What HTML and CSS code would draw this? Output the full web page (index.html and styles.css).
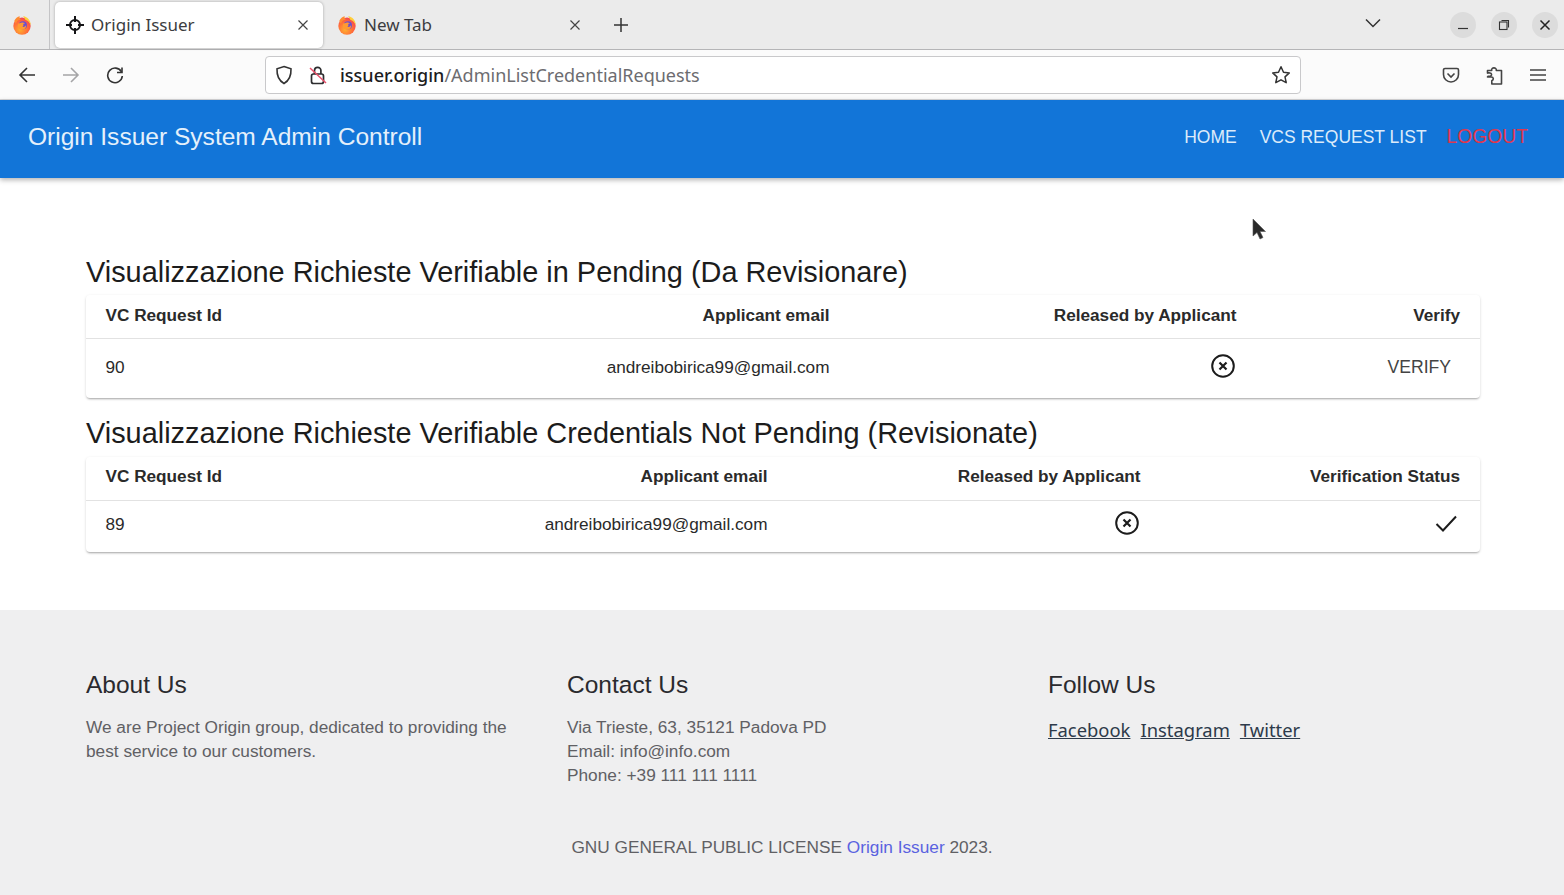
FILE: index.html
```html
<!DOCTYPE html>
<html lang="en">
<head>
<meta charset="UTF-8">
<title>Origin Issuer</title>
<link rel="stylesheet" href="styles.css">
</head>
<body>
<svg class="icon-defs" width="0" height="0">
    <defs>
        <radialGradient id="fx-body" cx="0.4" cy="0.7" r="0.8">
            <stop offset="0" stop-color="#ffb02e"/>
            <stop offset="0.55" stop-color="#ff6a3a"/>
            <stop offset="1" stop-color="#f0385c"/>
        </radialGradient>
        <symbol id="fx-logo" viewBox="0 0 18 18">
            <circle cx="9" cy="10" r="7.800" fill="url(#fx-body)"/>
            <path d="M2 5.500C3 3 5 1.500 7 1.200 6.500 2.500 7 3.500 8 4c-2.500.5-4 2-4.500 4z" fill="#ff8a30"/>
            <path d="M10 1c4 .8 7 4.200 6.800 8.500-.6-2.500-2.200-4.500-4.800-5.300z" fill="#ffcf3a"/>
            <circle cx="9.800" cy="9.300" r="3.700" fill="#6a4fd0"/>
            <path d="M7 7.500c1.500-1.300 4-1 5 .8-.8-.5-1.500-.4-2-.1.600.8.300 2-.6 2.500 1.600.3 2.800-.5 3.300-1.700.3 2.500-1.500 4.300-3.700 4.300-2.300 0-3.800-1.800-3.800-3.700 0-.8.300-1.500.8-2.100z" fill="#ff9a30"/>
        </symbol>
        <symbol id="cancel" viewBox="0 0 24 24">
            <circle cx="12" cy="12" r="10.800" fill="none" stroke="#1c1c1c" stroke-width="2"/>
            <path d="M8.500 8.500l7 7M15.500 8.500l-7 7" fill="none" stroke="#1c1c1c" stroke-width="2.200"/>
        </symbol>
    </defs>
</svg>

<div class="tab-strip">
    <div class="tab-home">
        <svg width="20" height="20"><use href="#fx-logo"/></svg>
    </div>
    <div class="tab tab-active">
        <svg width="18" height="18" viewBox="0 0 18 18" fill="none" stroke="#141416" stroke-width="2"><circle cx="9" cy="9" r="5"/><path d="M9 0v6M9 12v6M0 9h6M12 9h6"/></svg>
        <span class="tab-label">Origin Issuer</span>
        <svg class="tab-close" width="12" height="12" viewBox="0 0 12 12" stroke="#444" stroke-width="1.200"><path d="M1.500 1.500l9 9M10.500 1.500l-9 9"/></svg>
    </div>
    <div class="tab">
        <svg width="20" height="20"><use href="#fx-logo"/></svg>
        <span class="tab-label">New Tab</span>
        <svg class="tab-close" width="12" height="12" viewBox="0 0 12 12" stroke="#444" stroke-width="1.200"><path d="M1.500 1.500l9 9M10.500 1.500l-9 9"/></svg>
    </div>
    <svg class="new-tab" width="16" height="16" viewBox="0 0 16 16" stroke="#333" stroke-width="1.500"><path d="M8 1v14M1 8h14"/></svg>
    <svg class="tab-list" width="16" height="10" viewBox="0 0 16 10" fill="none" stroke="#333" stroke-width="1.500"><path d="M1 1.500l7 7 7-7"/></svg>
    <div class="win-buttons">
        <span class="win-btn"><svg width="12" height="12" viewBox="0 0 12 12" stroke="#333" stroke-width="1.200"><path d="M1 9.500h10"/></svg></span>
        <span class="win-btn"><svg width="12" height="12" viewBox="0 0 12 12" fill="none" stroke="#333" stroke-width="1.100"><rect x="1.500" y="3" width="7.500" height="7.500"/><path d="M3.500 1.500h7v7"/></svg></span>
        <span class="win-btn"><svg width="12" height="12" viewBox="0 0 12 12" stroke="#222" stroke-width="1.500"><path d="M1.500 1.500l9 9M10.500 1.500l-9 9"/></svg></span>
    </div>
</div>

<div class="toolbar">
    <div class="nav-icons">
        <svg width="18" height="18" viewBox="0 0 18 18" fill="none" stroke="#333" stroke-width="1.600"><path d="M17 9H2M9 2L2 9l7 7"/></svg>
        <svg width="18" height="18" viewBox="0 0 18 18" fill="none" stroke="#a5a5a7" stroke-width="1.600"><path d="M1 9h15M9 2l7 7-7 7"/></svg>
        <svg width="18" height="18" viewBox="0 0 18 18" fill="none" stroke="#333" stroke-width="1.600"><path d="M15.500 6A7.300 7.300 0 1 0 16.300 10"/><path d="M16 1.500V6.500H11"/></svg>
    </div>
    <div class="url-bar">
        <svg width="18" height="20" viewBox="0 0 18 20" fill="none" stroke="#333" stroke-width="1.600"><path d="M9 1.500l7 2.300c.3 6.500-1.500 11.700-7 14.700-5.500-3-7.300-8.200-7-14.700z"/></svg>
        <svg class="lock" width="18" height="20" viewBox="0 0 18 20" fill="none" stroke="#2c2c2e" stroke-width="1.700"><rect x="2.500" y="9" width="12" height="9.500" rx="2"/><path d="M5.500 9V5.500a3.200 3.200 0 0 1 6.400 0V9"/><path d="M1 3l16 15" stroke="#e8506a" stroke-width="1.500"/></svg>
        <span class="url-text"><b>issuer.origin</b>/AdminListCredentialRequests</span>
        <svg class="star" width="20" height="20" viewBox="0 0 20 20" fill="none" stroke="#333" stroke-width="1.500" stroke-linejoin="round"><path d="M10 1.800l2.500 5.400 5.800.7-4.300 4 1.200 5.800L10 14.800l-5.200 2.900L6 11.900l-4.300-4 5.800-.7z"/></svg>
    </div>
    <div class="tool-icons">
        <svg width="18" height="18" viewBox="0 0 18 18" fill="none" stroke="#444" stroke-width="1.600"><path d="M3 2.500h12a1.500 1.500 0 0 1 1.500 1.500v4.500a7.500 7.500 0 0 1-15 0V4A1.500 1.500 0 0 1 3 2.500z"/><path d="M5.500 7.500L9 11l3.500-3.500"/></svg>
        <svg width="18" height="20" viewBox="0 0 18 20" fill="none" stroke="#444" stroke-width="1.600" stroke-linejoin="round"><path d="M1.500 5.500h4.200c-.8-3.500 5.200-3.500 4.600 0h5.200v13.500H5.800v-3.200c2.200-1 2-3.800-.6-3.800H1.500l.6-.8c2.600.6 3.800-.9 3.400-2.200-.3-1.200-2.400-1.400-4-.9z"/></svg>
        <svg width="16" height="14" viewBox="0 0 16 14" stroke="#444" stroke-width="1.500"><path d="M0 2h16M0 7h16M0 12h16"/></svg>
    </div>
</div>

<header class="appbar">
    <h1 class="app-title">Origin Issuer System Admin Controll</h1>
    <nav class="app-nav">
        <a>HOME</a>
        <a>VCS REQUEST LIST</a>
        <a class="logout">LOGOUT</a>
    </nav>
</header>

<main class="content">
    <h2 class="section-title">Visualizzazione Richieste Verifiable in Pending (Da Revisionare)</h2>
    <div class="card">
        <table class="pending-table">
            <thead>
                <tr><th class="left">VC Request Id</th><th>Applicant email</th><th>Released by Applicant</th><th>Verify</th></tr>
            </thead>
            <tbody>
                <tr>
                    <td class="left">90</td>
                    <td>andreibobirica99@gmail.com</td>
                    <td><svg class="cancel-icon" width="24" height="24"><use href="#cancel"/></svg></td>
                    <td><span class="verify-btn">VERIFY</span></td>
                </tr>
            </tbody>
        </table>
    </div>

    <h2 class="section-title second">Visualizzazione Richieste Verifiable Credentials Not Pending (Revisionate)</h2>
    <div class="card">
        <table class="done-table">
            <thead>
                <tr><th class="left">VC Request Id</th><th>Applicant email</th><th>Released by Applicant</th><th>Verification Status</th></tr>
            </thead>
            <tbody>
                <tr>
                    <td class="left">89</td>
                    <td>andreibobirica99@gmail.com</td>
                    <td><svg class="cancel-icon" width="24" height="24"><use href="#cancel"/></svg></td>
                    <td><svg class="check-icon" width="24" height="24" viewBox="0 0 24 24" fill="none" stroke="#1c1c1c" stroke-width="2"><path d="M2.500 13l6.500 6.500L22 5.500"/></svg></td>
                </tr>
            </tbody>
        </table>
    </div>
</main>

<footer class="footer">
    <div class="footer-cols">
        <div>
            <h3>About Us</h3>
            <p>We are Project Origin group, dedicated to providing the best service to our customers.</p>
        </div>
        <div>
            <h3>Contact Us</h3>
            <p>Via Trieste, 63, 35121 Padova PD<br>Email: info@info.com<br>Phone: +39 111 111 1111</p>
        </div>
        <div>
            <h3>Follow Us</h3>
            <div class="social"><a>Facebook</a><a>Instagram</a><a>Twitter</a></div>
        </div>
    </div>
    <p class="license">GNU GENERAL PUBLIC LICENSE <a>Origin Issuer</a> 2023.</p>
</footer>

<svg class="cursor" width="16" height="24" viewBox="0 0 16 24"><path d="M1 1v17l4-3.500 3 6.500 3-1.500-3-6h5.500z" fill="#2a2a2a" stroke="#555" stroke-width=".6"/></svg>
</body>
</html>
```

FILE: styles.css
```css
body {
    margin: 0;
    height: 895px;
    overflow: hidden;
    position: relative;
    background: #fff;
    font-family: "Liberation Sans", Arial, sans-serif;
    color: #1f1f1f;
}
.icon-defs {
    position: absolute;
}

/* browser chrome */
.tab-strip {
    height: 50px;
    box-sizing: border-box;
    display: flex;
    align-items: center;
    background: #ebebeb;
    border-bottom: 1px solid #b5b5b7;
    font-family: "Noto Sans", "Open Sans", sans-serif;
    font-size: 17px;
    color: #3c3c40;
}
.tab-home {
    width: 50px;
    height: 49px;
    box-sizing: border-box;
    border-right: 1px solid #c4c4c6;
    padding-left: 12px;
    display: flex;
    align-items: center;
}
.tab {
    width: 268px;
    height: 46px;
    box-sizing: border-box;
    margin-right: 4px;
    padding: 0 14px 0 10px;
    display: flex;
    align-items: center;
    gap: 7px;
    border-radius: 5px;
}
.tab-active {
    margin-left: 5px;
    padding-left: 11px;
    background: #fff;
    box-shadow: 0 0 3px rgba(0, 0, 0, 0.3);
}
.tab-label {
    flex: 1;
}
.new-tab {
    margin-left: 14px;
}
.tab-list {
    margin-left: auto;
    margin-right: 69px;
    margin-bottom: 3px;
}
.win-buttons {
    display: flex;
    gap: 15px;
    margin-right: 6px;
}
.win-btn {
    width: 26px;
    height: 26px;
    border-radius: 50%;
    background: #dcdcdc;
    display: flex;
    align-items: center;
    justify-content: center;
}
.toolbar {
    height: 50px;
    box-sizing: border-box;
    padding-top: 1px;
    display: flex;
    align-items: center;
    background: #fbfbfb;
    border-bottom: 1px solid #d6d6d8;
}
.nav-icons {
    display: flex;
    gap: 26px;
    padding-left: 18px;
    width: 265px;
    box-sizing: border-box;
}
.url-bar {
    width: 1036px;
    height: 38px;
    box-sizing: border-box;
    display: flex;
    align-items: center;
    background: #fff;
    border: 1px solid #c9c9cb;
    border-radius: 4px;
    padding: 0 9px 0 9px;
    font-family: "Noto Sans", "Open Sans", sans-serif;
    font-size: 18px;
    color: #6c6c70;
}
.lock {
    margin-left: 16px;
}
.url-text {
    margin-left: 13px;
    flex: 1;
}
.url-text b {
    font-weight: 500;
    color: #1c1c1e;
}
.tool-icons {
    display: flex;
    align-items: center;
    gap: 26px;
    margin-left: 141px;
}

/* app bar */
.appbar {
    height: 78px;
    box-sizing: border-box;
    display: flex;
    justify-content: space-between;
    align-items: center;
    padding: 0 36px 4px 28px;
    background: #1275d8;
    color: #fff;
    box-shadow: 0 2px 5px rgba(0, 0, 0, 0.3);
    position: relative;
}
.app-title {
    margin: 0;
    font-size: 24.550px;
    font-weight: 400;
    color: #e4f0fb;
}
.app-nav {
    display: flex;
    align-items: center;
    gap: 23px;
    font-size: 17.500px;
    color: #dcebfa;
}
.logout {
    color: #e0384e;
    font-size: 19.300px;
    margin-left: -3px;
}

/* tables */
.content {
    height: 432px;
    box-sizing: border-box;
    padding: 76px 84px 0 86px;
}
.section-title {
    margin: 0 0 4px;
    height: 37px;
    line-height: 37px;
    font-size: 28.900px;
    font-weight: 400;
    color: #1c1c1c;
}
.section-title.second {
    margin: 17px 0 5px;
}
.card {
    background: #fff;
    border-radius: 4px;
    box-shadow: 0 2px 2px -1px rgba(0, 0, 0, 0.25), 0 1px 3px rgba(0, 0, 0, 0.14);
}
table {
    width: 100%;
    table-layout: fixed;
    border-collapse: collapse;
    font-size: 17.200px;
    color: #2a2a2a;
}
th, td {
    padding: 0 20px 3px;
    text-align: right;
}
th {
    height: 40px;
    font-weight: 700;
    border-bottom: 1px solid #e2e2e2;
}
.left {
    text-align: left;
}
th.left, td.left {
    padding-left: 19.500px;
}
.pending-table tr > :nth-child(1) { width: 340px; }
.pending-table tr > :nth-child(2) { width: 344px; }
.pending-table tr > :nth-child(3) { width: 367px; }
.pending-table td {
    height: 56px;
}
.done-table tr > :nth-child(1) { width: 340px; }
.done-table tr > :nth-child(2) { width: 282px; }
.done-table tr > :nth-child(3) { width: 333px; }
.done-table th {
    height: 38px;
    padding-bottom: 5px;
}
.done-table td {
    height: 46px;
    padding-bottom: 5px;
}
.cancel-icon {
    display: block;
    margin: -3px 2px 0 auto;
}
.done-table .cancel-icon {
    margin-top: -2px;
}
.check-icon {
    display: block;
    margin: -2px 2px 0 auto;
}
.verify-btn {
    display: inline-block;
    padding: 0 9px 0 0;
    color: #444;
    font-size: 17.600px;
}

/* footer */
.footer {
    height: 285px;
    box-sizing: border-box;
    padding: 60px 86px 0;
    background: #efeff0;
    color: #606064;
    font-size: 17.250px;
    line-height: 24px;
}
.footer-cols {
    display: grid;
    grid-template-columns: 481px 481px 1fr;
    height: 165px;
}
.footer h3 {
    margin: 0 0 15px;
    font-size: 24.500px;
    line-height: 30px;
    font-weight: 400;
    color: #2a2a2e;
}
.footer-cols p {
    margin: 0;
    max-width: 440px;
}
.social {
    display: flex;
    gap: 10px;
    padding-top: 3px;
    font-family: "Noto Sans", "Open Sans", sans-serif;
    font-size: 18.400px;
    color: #2d3a4a;
}
.social a {
    text-decoration: underline;
}
.license {
    margin: 0;
    text-align: center;
}
.license a {
    color: #5a62e0;
}

.cursor {
    position: absolute;
    left: 1252px;
    top: 218px;
}
```
